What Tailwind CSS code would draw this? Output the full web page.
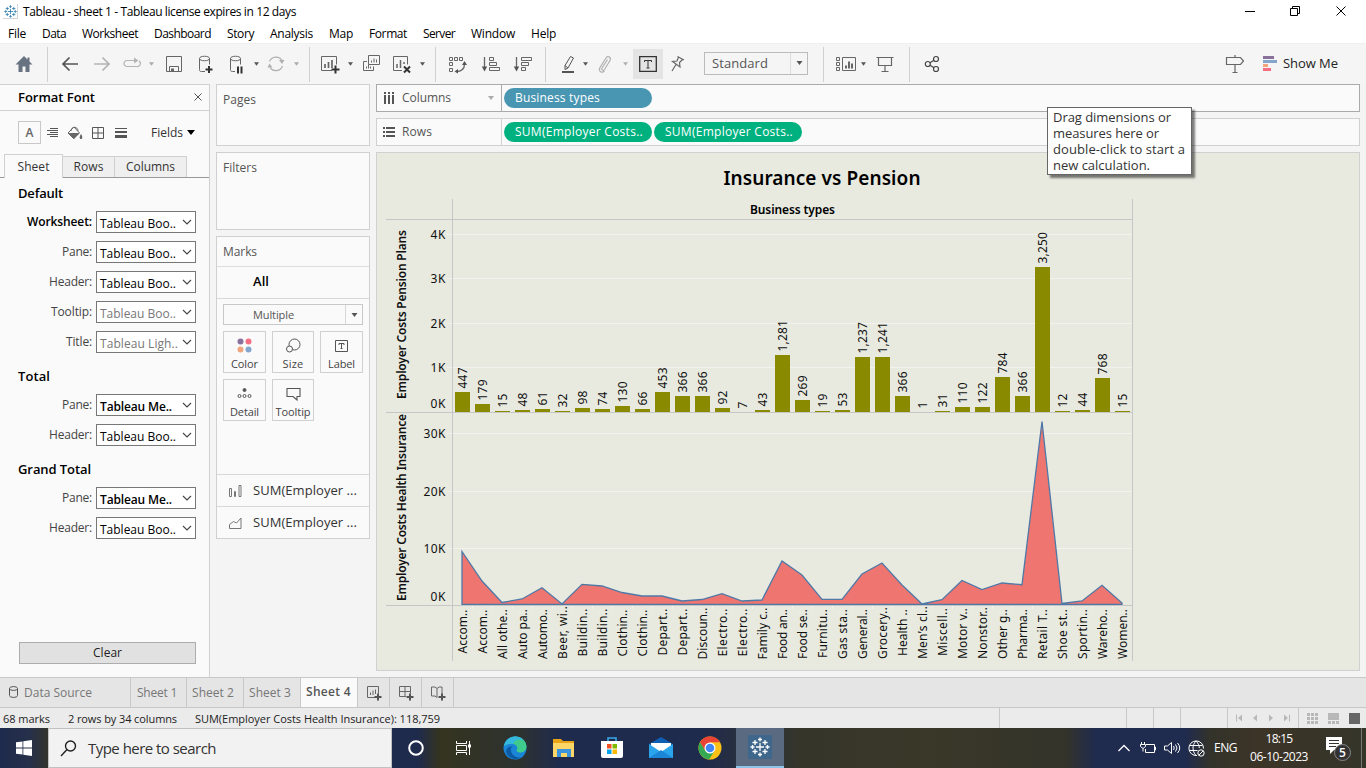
<!DOCTYPE html>
<html lang="en">
<head>
<meta charset="utf-8">
<title>Tableau - sheet 1</title>
<script src="https://cdn.jsdelivr.net/npm/@tailwindcss/browser@4"></script>
</head>
<body class="w-[1366px] h-[768px] overflow-hidden flex flex-col bg-[#f4f4f4] font-['Open_Sans',sans-serif] text-[12px] text-[#333] leading-none whitespace-nowrap">

<!-- shared symbols -->
<svg class="hidden">
  <symbol id="caret" viewBox="0 0 6 4"><path d="M0 0h6L3 4z" fill="currentColor"/></symbol>
  <symbol id="chev" viewBox="0 0 10 6"><path d="M1 1l4 4 4-4" fill="none" stroke="currentColor" stroke-width="1.1"/></symbol>
  <symbol id="tabmark" viewBox="0 0 20 20"><path d="M10 6v8M6 10h8M10 0.5v4M8 2.5h4M10 15.5v4M8 17.5h4M.5 10h4M2.5 8v4M15.5 10h4M17.5 8v4M5 3v5M2.5 5.500h5M15 3v5M12.500 5.500h5M5 12v5M2.500 14.500h5M15 12v5M12.500 14.500h5" fill="none" stroke="currentColor" stroke-width="1.300"/></symbol>
</svg>

<!-- title bar -->
<header class="h-[24px] bg-white flex items-center text-black shrink-0">
  <div class="ml-[3px] mt-[-1px] w-[15px] h-[15px] border-r border-b border-gray-300 text-[#2f7fae] flex items-center justify-center"><svg class="w-[13px] h-[13px]"><use href="#tabmark"/></svg></div>
  <span class="ml-[5px] text-[12px]" data-w="273">Tableau - sheet 1 - Tableau license expires in 12 days</span>
  <svg class="ml-auto mr-[18px] mt-[-3px] w-[104px] h-[12px]" viewBox="0 0 104 12" fill="none" stroke="#000" stroke-width="1"><path d="M1 6.500h10M46.500 3.500h7v7h-7zM48.500 3.500v-2h7v7h-2M92.500 1.500l9 9M101.500 1.500l-9 9"/></svg>
</header>

<!-- menu -->
<nav class="h-[19px] bg-white flex items-center text-black shrink-0 text-[12px]">
  <span class="ml-[8px]" data-w="18">File</span><span class="ml-[16px]" data-w="24">Data</span><span class="ml-[16px]" data-w="56">Worksheet</span><span class="ml-[16px]" data-w="57">Dashboard</span><span class="ml-[16px]" data-w="27">Story</span><span class="ml-[16px]" data-w="43">Analysis</span><span class="ml-[16px]" data-w="24">Map</span><span class="ml-[16px]" data-w="38">Format</span><span class="ml-[16px]" data-w="32">Server</span><span class="ml-[16px]" data-w="44">Window</span><span class="ml-[16px]" data-w="25">Help</span>
</nav>

<!-- toolbar -->
<div class="h-[41px] flex items-center shrink-0 bg-[#f5f5f5] border-t border-[#f0f0f0] text-[#555]">
  <svg class="ml-[14px] w-[20px] h-[20px]" viewBox="0 0 20 20"><path d="M10 2L1.500 10.500H4.500V18H8.500V12.500H11.500V18H15.500V10.500H18.500L15.500 7.500V3.500H13.500V5.500z" fill="#687382"/></svg>
  <i class="ml-[13px] w-px h-[35px] bg-[#d0d0d0]"></i>
  <svg class="ml-[12px] w-[20px] h-[20px]" viewBox="0 0 20 20" fill="none" stroke="#555" stroke-width="1.700"><path d="M18 10H3M9.500 3.500L3 10l6.500 6.500"/></svg>
  <svg class="ml-[12px] w-[20px] h-[20px]" viewBox="0 0 20 20" fill="none" stroke="#b4b4b4" stroke-width="1.700"><path d="M2 10H17M10.500 3.500L17 10l-6.500 6.500"/></svg>
  <svg class="ml-[10px] w-[20px] h-[20px]" viewBox="0 0 20 20" fill="none" stroke="#b4b4b4" stroke-width="1.200"><path d="M9 6.500H5a3 3 0 0 0-3 3v0a3 3 0 0 0 3 3h10a3 3 0 0 0 2-5.500M8 6.500h7"/><path d="M12 3.500l4.500 3-4.500 3z" fill="#b4b4b4" stroke="none"/></svg>
  <svg class="ml-[7px] w-[5px] h-[4px] text-[#aaa]"><use href="#caret"/></svg>
  <svg class="ml-[10px] w-[20px] h-[20px]" viewBox="0 0 20 20" fill="none" stroke="#666"><path d="M2.500 2.500h15v15h-15zM5.500 17.500v-5h9v5" /><path d="M7 14.500h3v3H7z" fill="#666" stroke="none"/></svg>
  <svg class="ml-[12px] w-[20px] h-[20px]" viewBox="0 0 20 20" fill="none" stroke="#666"><path d="M9 17.500H5.500c-2 0-2-1-2-2v-11M13.500 4.500v6M3.500 4.500c0-3 10-3 10 0s-10 3-10 0z"/><path d="M9.500 15.500h7M13 12v7" stroke="#333" stroke-width="2"/></svg>
  <svg class="ml-[10px] w-[20px] h-[20px]" viewBox="0 0 20 20" fill="none" stroke="#666"><path d="M9 17.500H6.500c-2 0-2-1-2-2v-11M14.500 4.500v6M4.500 4.500c0-3 10-3 10 0s-10 3-10 0z"/><path d="M12 12.500v7M15.500 12.500v7" stroke="#333" stroke-width="2"/></svg>
  <svg class="ml-[8px] w-[5px] h-[4px] text-[#555]"><use href="#caret"/></svg>
  <svg class="ml-[7px] w-[20px] h-[20px]" viewBox="0 0 20 20" fill="none" stroke="#b0b0b0" stroke-width="1.200"><path d="M3.500 7.500a7 7 0 0 1 12.500-1M16.500 12a7 7 0 0 1-12.500 1.500"/><path d="M13 6h5.500l-2.500 4zM1.500 13.500h5l-3-4z" fill="#b0b0b0" stroke="none"/></svg>
  <svg class="ml-[8px] w-[5px] h-[4px] text-[#aaa]"><use href="#caret"/></svg>
  <i class="ml-[10px] w-px h-[35px] bg-[#d0d0d0]"></i>
  <svg class="ml-[10px] w-[22px] h-[20px]" viewBox="0 0 22 20" fill="none" stroke="#666"><path d="M12 16.500H1.500v-14h15v8"/><path d="M5 14v-4M8.500 14V8M12 14V6" stroke-width="1.700"/><path d="M11.500 15.500h8M15.500 11.500v8" stroke="#333" stroke-width="2"/></svg>
  <svg class="ml-[6px] w-[5px] h-[4px] text-[#555]"><use href="#caret"/></svg>
  <svg class="ml-[8px] w-[22px] h-[20px]" viewBox="0 0 22 20" fill="none" stroke="#666"><path d="M7.500 1.500h11v9h-11zM6 7.500H2.500v9h10v-4M10.500 8.500v-2M13 8.500v-4M15.500 8.500v-3M5.500 14.500v-2M7.500 14.500v-4M9.500 14.500v-2"/></svg>
  <svg class="ml-[8px] w-[22px] h-[20px]" viewBox="0 0 22 20" fill="none" stroke="#666"><path d="M11 16.500H2.500v-14h14v8"/><path d="M6 14v-4M9.500 14V6M13 10V8" stroke-width="1.500"/><path d="M13 12.500l6 6M19 12.500l-6 6" stroke="#333" stroke-width="2"/></svg>
  <svg class="ml-[7px] w-[5px] h-[4px] text-[#555]"><use href="#caret"/></svg>
  <i class="ml-[10px] w-px h-[35px] bg-[#d0d0d0]"></i>
  <svg class="ml-[12px] w-[20px] h-[20px]" viewBox="0 0 20 20" fill="none" stroke="#666"><path d="M1.500 3.500h3v3h-3zM6.500 3.500h3v3h-3zM11.500 3.500h3v3h-3zM1.500 8.500h3v3h-3zM1.500 14.500h3v3h-3z"/><path d="M16.500 10c0 5-3 7.500-8.500 7.500" stroke-width="1.300"/><path d="M16.500 7l2.500 4h-5zM6.500 17.500l3.500-2.500v4.500z" fill="#555" stroke="none"/></svg>
  <svg class="ml-[13px] w-[20px] h-[20px]" viewBox="0 0 20 20" fill="none" stroke="#666"><path d="M3.500 3v12" stroke-width="1.300"/><path d="M.8 12.500h5.400L3.500 17.500z" fill="#555" stroke="none"/><path d="M8.500 3.500h4v3h-4zM8.500 8.500h7v3h-7zM8.500 13.500h10v3h-10z"/></svg>
  <svg class="ml-[12px] w-[20px] h-[20px]" viewBox="0 0 20 20" fill="none" stroke="#666"><path d="M3.500 3v12" stroke-width="1.300"/><path d="M.8 12.500h5.400L3.500 17.500z" fill="#555" stroke="none"/><path d="M8.500 3.500h10v3h-10zM8.500 8.500h7v3h-7zM8.500 13.500h4v3h-4z"/></svg>
  <i class="ml-[12px] w-px h-[35px] bg-[#d0d0d0]"></i>
  <svg class="ml-[14px] w-[20px] h-[20px]" viewBox="0 0 20 20" fill="none" stroke="#555"><path d="M10.500 2.500l3 1.500-5.500 10-3 1.500v-4zM5 11.500l3 2.500"/><path d="M2 18h12" stroke-width="2"/></svg>
  <svg class="ml-[3px] w-[5px] h-[4px] text-[#555]"><use href="#caret"/></svg>
  <svg class="ml-[7px] w-[20px] h-[20px]" viewBox="0 0 20 20" fill="none" stroke="#b0b0b0" stroke-width="1.200"><path d="M12.500 5.500l-5.500 8.500c-1 2 1.500 3 2.500 1.500l5.500-9c1.500-3-2-5.500-4-2.500l-6 9.500c-2 4 2 6 4.500 3.500"/></svg>
  <svg class="ml-[8px] w-[5px] h-[4px] text-[#b0b0b0]"><use href="#caret"/></svg>
  <div class="ml-[5px] w-[30px] h-[30px] bg-[#e4e4e4] flex items-center justify-center"><svg class="w-[18px] h-[16px]" viewBox="0 0 18 16" fill="none" stroke="#333"><path d="M.7.7h16.600v14.600H.7z" stroke-width="1.300"/><path d="M5.500 6V4.500h7V6M9 4.500v7.500M7.500 12h3"/></svg></div>
  <svg class="ml-[4px] w-[20px] h-[20px]" viewBox="0 0 20 20" fill="none" stroke="#666" stroke-width="1.200"><path d="M10.500 2.500l6.500 3.500M11.500 3L10 7l-4.500.5L13 13l-.5-4.500 3-3M9 10.500l-4 6.500"/></svg>
  <div class="ml-[17px] w-[104px] h-[23px] mt-[-2px] border border-[#bbb] flex items-center text-[#555]">
    <span class="pl-[7px] text-[13px] w-[85px]"><span data-w="56">Standard</span></span>
    <div class="flex-1 h-full border-l border-[#ddd] flex items-center justify-center"><svg class="w-[7px] h-[4px]"><use href="#caret"/></svg></div>
  </div>
  <i class="ml-[15px] w-px h-[35px] bg-[#d0d0d0]"></i>
  <svg class="ml-[11px] w-[22px] h-[20px]" viewBox="0 0 22 20" fill="none" stroke="#666"><path d="M1.500 3.500h3v3h-3zM1.500 8.500h3v3h-3zM1.500 13.500h3v3h-3zM7.500 3.500h13v13h-13z"/><path d="M11 14.500v-3M14 14.500v-7M17 14.500v-5" stroke-width="2"/></svg>
  <svg class="ml-[4px] w-[5px] h-[4px] text-[#555]"><use href="#caret"/></svg>
  <svg class="ml-[9px] w-[20px] h-[20px]" viewBox="0 0 20 20" fill="none" stroke="#666" stroke-width="1.200"><path d="M1.500 3.500h17M3.500 3.500v8h13v-8M10 11.500v6M6.500 17.500h7"/></svg>
  <i class="ml-[14px] w-px h-[35px] bg-[#d0d0d0]"></i>
  <svg class="ml-[14px] w-[20px] h-[20px]" viewBox="0 0 20 20" fill="none" stroke="#444" stroke-width="1.200"><circle cx="3.800" cy="10" r="2.500"/><circle cx="12" cy="5" r="2.500"/><circle cx="12" cy="15" r="2.500"/><path d="M6 8.700l4-2.400M6 11.300l4 2.400"/></svg>
  <svg class="ml-[281px] w-[20px] h-[20px]" viewBox="0 0 20 20" fill="none" stroke="#666" stroke-width="1.200"><path d="M1.500 3.500h14l3 3.500-3 3.500h-14zM10 1v2.500M10 10.500v8M7.500 18.500h5"/></svg>
  <svg class="ml-[18px] w-[14px] h-[16px]" viewBox="0 0 14 16"><path d="M0 0h11v3H0z" fill="#8a719b"/><path d="M0 4h14v3H0z" fill="#85a6cc"/><path d="M0 8h5v3H0z" fill="#f0a57c"/><path d="M0 12h8v3H0z" fill="#f76d82"/></svg>
  <span class="ml-[6px] text-[13px] mt-[-2px] text-[#222]" data-w="55">Show Me</span>
</div>

<!-- work area -->
<main class="h-[593px] flex shrink-0">

  <!-- format pane -->
  <aside class="w-[210px] border-r border-t border-[#d0d0d0] bg-[#fafafa] flex flex-col">
    <div class="h-[26px] border-b border-[#d0d0d0] flex items-center pl-[18px] pr-[7px] justify-between text-black shrink-0">
      <span class="text-[13px] font-semibold" data-w="77">Format Font</span>
      <svg class="w-[8px] h-[8px] mt-[-1px]" viewBox="0 0 8 8"><path d="M.5.5l7 7M7.500.5l-7 7" stroke="#555"/></svg>
    </div>
    <div class="h-[43px] flex items-center pl-[18px] text-[#666] shrink-0">
      <div class="w-[23px] h-[23px] border border-[#c8c8c8] flex items-center justify-center font-semibold text-[12px]">A</div>
      <svg class="ml-[6px] w-[11px] h-[11px]" viewBox="0 0 11 11" stroke="#555"><path d="M3 1.500h8M0 3.500h11M3 5.500h8M0 7.500h11M3 9.500h8"/></svg>
      <svg class="ml-[9px] w-[16px] h-[14px]" viewBox="0 0 16 14" fill="none" stroke="#666"><path d="M1 7l6-6 5.500 6-6 5.500zM4 5c0-5 7-5 7 0"/><path d="M1.500 7h11L7 13zM14 8c2 3 1.500 5 0 5s-2-2 0-5z" fill="#666" stroke="none"/></svg>
      <svg class="ml-[9px] w-[12px] h-[12px]" viewBox="0 0 12 12" fill="none" stroke="#555"><path d="M.5.5h11v11H.5zM6 1v10M1 6h10"/></svg>
      <svg class="ml-[11px] w-[12px] h-[12px]" viewBox="0 0 12 12" fill="#555"><path d="M0 1h12v1H0zM0 4h12v2H0zM0 8h12v3H0z"/></svg>
      <span class="ml-[24px] text-[#333]" data-w="32">Fields</span>
      <svg class="ml-[4px] w-[8px] h-[5px] text-black" viewBox="0 0 8 5"><path d="M0 0h8L4 5z"/></svg>
    </div>
    <div class="h-[24px] flex items-end border-b border-[#999] pl-[4px] shrink-0">
      <div class="w-[59px] h-[24px] mb-[-1px] bg-[#fafafa] border border-b-0 border-[#d0d0d0] flex items-center justify-center"><span data-w="32">Sheet</span></div>
      <div class="w-[52px] h-[21px] bg-[#efefef] border-t border-r border-[#d0d0d0] flex items-center justify-center"><span data-w="30">Rows</span></div>
      <div class="w-[72px] h-[21px] bg-[#efefef] border-t border-r border-[#d0d0d0] flex items-center justify-center"><span data-w="49">Columns</span></div>
    </div>
    <div id="fmt" class="flex flex-col"></div>
    <button class="mt-[95px] ml-[19px] w-[177px] h-[22px] bg-[#e1e1e1] border border-[#adadad] text-[#222]"><span data-w="29">Clear</span></button>
  </aside>

  <!-- cards -->
  <section class="ml-[6px] w-[154px] flex flex-col gap-[6px] text-[#555] shrink-0">
    <div class="h-[62px] border border-[#d0d0d0] bg-[#fafafa] pl-[6px] pt-[9px]"><span data-w="33">Pages</span></div>
    <div class="h-[78px] border border-[#d0d0d0] bg-[#fafafa] pl-[6px] pt-[9px]"><span data-w="34">Filters</span></div>
    <div class="h-[303px] border border-[#d0d0d0] bg-[#fafafa] flex flex-col">
      <div class="h-[30px] border-b border-[#ddd] flex items-center pl-[6px]"><span data-w="34">Marks</span></div>
      <div class="h-[32px] border-b border-[#d8d8d8] flex items-center pl-[36px] pb-[2px] text-[13px] font-semibold text-black"><span data-w="16">All</span></div>
      <div class="mx-[6px] mt-[5px] h-[21px] border border-[#c8c8c8] flex items-center">
        <span class="w-[121px] pl-[29px] text-[11px]"><span data-w="41">Multiple</span></span>
        <div class="flex-1 h-full border-l border-[#d8d8d8] flex items-center justify-center"><svg class="w-[7px] h-[4px]"><use href="#caret"/></svg></div>
      </div>
      <div class="mx-[6px] mt-[6px] grid grid-cols-[43px_42px_43px] gap-[6px] text-[11px] text-[#444]">
        <div class="h-[42px] border border-[#d0d0d0] flex flex-col items-center pt-[6px] gap-[5px]"><svg class="w-[15px] h-[15px]" viewBox="0 0 15 15"><circle cx="3.500" cy="3.500" r="3" fill="#8a719b"/><circle cx="11.500" cy="3.500" r="3" fill="#f76d82"/><circle cx="3.500" cy="11.500" r="3" fill="#f0a57c"/><circle cx="11.500" cy="11.500" r="3" fill="#85a6cc"/></svg><span data-w="27">Color</span></div>
        <div class="h-[42px] border border-[#d0d0d0] flex flex-col items-center pt-[6px] gap-[5px]"><svg class="w-[15px] h-[15px]" viewBox="0 0 15 15" fill="none" stroke="#555"><circle cx="8.500" cy="6.500" r="5.500"/><circle cx="3.500" cy="11" r="3" fill="#fafafa"/></svg><span data-w="21">Size</span></div>
        <div class="h-[42px] border border-[#d0d0d0] flex flex-col items-center pt-[6px] gap-[5px]"><svg class="w-[15px] h-[15px]" viewBox="0 0 15 15" fill="none" stroke="#555"><path d="M1.500 2.500h12v11h-12zM5 7V5.500h5V7M7.500 5.500v5M6.500 10.500h2"/></svg><span data-w="27">Label</span></div>
        <div class="h-[42px] border border-[#d0d0d0] flex flex-col items-center pt-[6px] gap-[5px]"><svg class="w-[15px] h-[15px]" viewBox="0 0 15 15" fill="none" stroke="#555"><circle cx="7.500" cy="4" r="1.500" fill="#555"/><circle cx="2.500" cy="10" r="1.500"/><circle cx="7.500" cy="10" r="1.500"/><circle cx="12.500" cy="10" r="1.500"/></svg><span data-w="29">Detail</span></div>
        <div class="h-[42px] border border-[#d0d0d0] flex flex-col items-center pt-[6px] gap-[5px]"><svg class="w-[15px] h-[15px]" viewBox="0 0 15 15" fill="none" stroke="#555" stroke-width="1.100"><path d="M1 2.500h13v8h-3v3.500l-4-3.500H1z"/></svg><span data-w="35">Tooltip</span></div>
      </div>
      <div class="mt-auto h-[32px] border-t border-[#d8d8d8] flex items-center pl-[12px] text-[13px]"><svg class="w-[13px] h-[14px]" viewBox="0 0 13 14" fill="none" stroke="#777"><path d="M.5 4.500h2v8h-2zM5.500 7.500h1v5h-1zM10 1.500h2v11h-2z"/></svg><span class="ml-[11px] text-[#333]" data-w="104">SUM(Employer ...</span></div>
      <div class="h-[32px] border-t border-[#d8d8d8] flex items-center pl-[12px] text-[13px]"><svg class="w-[13px] h-[14px]" viewBox="0 0 13 14" fill="none" stroke="#777"><path d="M.5 12.500V8.500l4-3 3 1.500 4.500-5v10.500z"/></svg><span class="ml-[11px] text-[#333]" data-w="104">SUM(Employer ...</span></div>
    </div>
  </section>

  <!-- shelves and view -->
  <section class="ml-[6px] w-[984px] flex flex-col shrink-0 relative">
    <div class="h-[28px] border border-[#aaa] bg-[#fafafa] flex items-center text-[#555]">
      <svg class="ml-[7px] w-[11px] h-[12px]" viewBox="0 0 11 12" fill="#555"><path d="M0 0h2v2H0zM4 0h2v2H4zM8 0h2v2H8zM0 3h2v9H0zM4 3h2v9H4zM8 3h2v9H8z"/></svg>
      <span class="ml-[7px] w-[85px]"><span data-w="49">Columns</span></span>
      <svg class="w-[8px] h-[4px] text-[#aaa]"><use href="#caret"/></svg>
      <div class="ml-[6px] w-px h-full bg-[#aaa]"></div>
      <div class="ml-[2px] w-[148px] h-[20px] rounded-full bg-[#4996b2] text-white flex items-center pl-[11px]"><span data-w="85">Business types</span></div>
    </div>
    <div class="mt-[6px] h-[28px] border border-[#d0d0d0] bg-[#fafafa] flex items-center text-[#555]">
      <svg class="ml-[6px] w-[12px] h-[10px]" viewBox="0 0 12 10" fill="#555"><path d="M0 0h2v2H0zM0 4h2v2H0zM0 8h2v2H0zM3 0h9v2H3zM3 4h9v2H3zM3 8h9v2H3z"/></svg>
      <span class="ml-[7px] w-[99px]"><span data-w="30">Rows</span></span>
      <div class="w-px h-full bg-[#d0d0d0]"></div>
      <div class="ml-[2px] w-[148px] h-[20px] rounded-full bg-[#00b180] text-white flex items-center pl-[11px]"><span data-w="128">SUM(Employer Costs..</span></div>
      <div class="ml-[2px] w-[148px] h-[20px] rounded-full bg-[#00b180] text-white flex items-center pl-[11px]"><span data-w="128">SUM(Employer Costs..</span></div>
    </div>
    <div class="mt-[6px] h-[519px] border border-[#d0d0d0] bg-[#e8eae0]">
      <svg id="chart" class="w-[982px] h-[517px] font-['Noto_Sans',sans-serif]" viewBox="377 153 982 517" font-size="12" fill="#111"></svg>
    </div>
    <!-- tooltip -->
    <div class="absolute left-[671px] top-[23px] w-[145px] h-[68px] bg-white border border-[#666] shadow-[3px_3px_2px_rgba(0,0,0,0.5)] pl-[5px] pt-[1px] text-[13px] leading-[16px] text-[#333] flex flex-col items-start">
      <span data-w="118">Drag dimensions or</span><span data-w="106">measures here or</span><span data-w="132">double-click to start a</span><span data-w="97">new calculation.</span>
    </div>
  </section>
</main>

<!-- sheet tabs -->
<div class="h-[31px] shrink-0 bg-[#e5e5e5] border-t border-b border-[#c8c8c8] flex items-stretch text-[#777]">
  <div class="w-[131px] border-r border-[#c8c8c8] flex items-center pl-[9px]"><svg class="w-[10px] h-[12px] mt-[-2px]" viewBox="0 0 10 12" fill="none" stroke="#555"><path d="M.5 2.500v7c0 2.500 8 2.500 8 0v-7M.5 2.500c0-2.500 8-2.500 8 0s-8 2.500-8 0z"/></svg><span class="ml-[5px]" data-w="68">Data Source</span></div>
  <div class="w-[56px] border-r border-[#c8c8c8] flex items-center pl-[6px]"><span data-w="40">Sheet 1</span></div>
  <div class="w-[57px] border-r border-[#c8c8c8] flex items-center pl-[5px]"><span data-w="42">Sheet 2</span></div>
  <div class="w-[57px] border-r border-[#c8c8c8] flex items-center pl-[5px]"><span data-w="42">Sheet 3</span></div>
  <div class="w-[57px] border-r border-[#c8c8c8] bg-[#fafafa] flex items-center pl-[5px] pb-[2px] font-semibold text-[#555]"><span data-w="45">Sheet 4</span></div>
  <div class="w-[32px] border-r border-[#c8c8c8] flex items-center justify-center"><svg class="w-[16px] h-[16px]" viewBox="0 0 16 16" fill="none" stroke="#666"><path d="M9 12.500H1.500v-11h11v7M4.500 10V7.500M7 10V5.500M9.500 9V4.500"/><path d="M8.500 12h7M12 8.500v7" stroke="#555" stroke-width="2"/></svg></div>
  <div class="w-[32px] border-r border-[#c8c8c8] flex items-center justify-center"><svg class="w-[16px] h-[16px]" viewBox="0 0 16 16" fill="none" stroke="#666"><path d="M8 11.500H1.500v-10h11v7M7 1.500v10M1.500 6.500h11"/><path d="M8.500 12h7M12 8.500v7" stroke="#555" stroke-width="2"/></svg></div>
  <div class="w-[32px] border-r border-[#c8c8c8] flex items-center justify-center"><svg class="w-[16px] h-[16px]" viewBox="0 0 16 16" fill="none" stroke="#666"><path d="M7 12.500l-2-1.500H1.500v-9H5l2 1.500 2-1.500h3v7M7 3.500v9"/><path d="M8.500 12h7M12 8.500v7" stroke="#555" stroke-width="2"/></svg></div>
</div>

<!-- status bar -->
<div class="h-[20px] shrink-0 bg-[#ebebeb] flex items-center pl-[3px] text-[11px] text-[#222]">
  <span data-w="47">68 marks</span><span class="ml-[18px]" data-w="109">2 rows by 34 columns</span><span class="ml-[18px]" data-w="245">SUM(Employer Costs Health Insurance): 118,759</span>
  <div class="ml-auto h-full flex items-center text-[#b8b8b8]">
    <i class="w-px h-full bg-[#c8c8c8] mr-[126px]"></i><i class="w-px h-full bg-[#c8c8c8] mr-[26px]"></i><i class="w-px h-full bg-[#c8c8c8] mr-[26px]"></i><i class="w-px h-full bg-[#c8c8c8] mr-[46px]"></i><i class="w-px h-full bg-[#c8c8c8] mr-[8px]"></i>
    <svg class="w-[56px] h-[8px]" viewBox="0 0 56 8" fill="currentColor"><path d="M0 .5h1v7H0zM6 .5v7L2 4zM21 .5v7L17 4zM33 .5v7L37 4zM48 .5v7L52 4zM53 .5h1v7h-1z"/></svg>
    <i class="w-px h-full bg-[#c8c8c8] ml-[6px] mr-[8px]"></i>
    <svg class="w-[54px] h-[11px] mr-[5px]" viewBox="0 0 54 11" fill="#b8b8b8"><path d="M0 0h3v3H0zM4 0h3v3H4zM8 0h3v3H8zM0 4h3v3H0zM4 4h3v3H4zM8 4h3v3H8zM0 8h3v3H0zM4 8h3v3H4zM8 8h3v3H8zM21 0h11v7H21zM21 8h3v3H21zM25 8h3v3H25zM29 8h3v3H29z"/><path d="M42 0h11v11H42z" fill="#666"/></svg>
  </div>
</div>

<!-- taskbar -->
<footer class="h-[40px] shrink-0 flex items-center text-white bg-[linear-gradient(90deg,#1f2b4d_0px,#26304a_30px,#33342c_48px,#1f2b4d_392px,#1f2b4d_418px,#35341f_440px,#2d3230_520px,#1f2b4d_560px,#1f2b4d_700px,#35352a_800px,#3a3828_930px,#33332a_1066px,#1f2b4f_1096px,#1f2b4f_1185px,#33332a_1210px,#3c3427_1260px,#35352a_1366px)]">
  <div class="w-[48px] flex justify-center"><svg class="w-[16px] h-[16px]" viewBox="0 0 16 16" fill="#fff"><path d="M0 2.300l6.500-.9v6.200H0zM7.300 1.300L16 0v7.600H7.300zM0 8.400h6.500v6.200L0 13.700zM7.300 8.400H16V16l-8.700-1.300z"/></svg></div>
  <div class="w-[344px] h-full bg-[#f2f2f2] border border-[#c0c0c0] flex items-center text-[#333]">
    <svg class="ml-[11px] w-[17px] h-[17px]" viewBox="0 0 17 17" fill="none" stroke="#222" stroke-width="1.400"><circle cx="10.500" cy="6" r="5"/><path d="M7 9.500L1 16"/></svg>
    <span class="ml-[11px] text-[15px]" data-w="128">Type here to search</span>
  </div>
  <div class="w-[48px] flex justify-center"><svg class="w-[16px] h-[16px]" viewBox="0 0 16 16" fill="none" stroke="#fff" stroke-width="2"><circle cx="8" cy="8" r="6.800"/></svg></div>
  <div class="w-[48px] flex justify-center"><svg class="w-[16px] h-[16px]" viewBox="0 0 16 16" fill="none" stroke="#fff"><path d="M.5 1v2.500h10V1M.5 5.500h10v5H.5zM.5 15v-2.500h10V15M13.500 1v14"/><path d="M12 4.500h3v3h-3z" fill="#fff" stroke="none"/></svg></div>
  <div class="w-[54px] flex justify-center"><svg class="w-[24px] h-[24px]" viewBox="0 0 24 24"><circle cx="12" cy="12" r="11.500" fill="#1b86d8"/><path d="M1 10C3 3 8 .5 12 .5c7 0 11.500 5 11.500 10 0 4-3 6-6.500 6-3 0-4-1.500-3-3 .8-1.300.5-4.500-3.500-5.500C6.500 7 2.500 9 1 10z" fill="#3ecb8c"/><path d="M1 10C3 3 8 .5 12 .5c4 0 7 1.500 9 4-5-2-9-1-11 3.500C6 7 3 8.500 1 10z" fill="#35b8e0"/><path d="M8 12c-1 6 4 10 10 9.500C12 25 4 22 3 15c1-4 4-5 7-4.500z" fill="#0c59a4"/></svg></div>
  <div class="w-[44px] flex justify-center"><svg class="w-[22px] h-[20px]" viewBox="0 0 22 20"><path d="M0 1h8l2 2h11v4H0z" fill="#e8a317"/><path d="M0 5h21v14H0z" fill="#fcd667"/><path d="M4 11h14v8h-4v-4H8v4H4z" fill="#3a93dc"/></svg></div>
  <div class="w-[52px] flex justify-center"><svg class="w-[24px] h-[24px]" viewBox="0 0 24 24"><path d="M8 5V2h8v3" fill="none" stroke="#3aa9e8" stroke-width="1.600"/><path d="M1 5h22v15q0 2-2 2H3q-2 0-2-2z" fill="#fff"/><path d="M7 8h4.500v4.500H7z" fill="#f25022"/><path d="M12.500 8H17v4.500h-4.500z" fill="#7fba00"/><path d="M7 13.500h4.500V18H7z" fill="#00a4ef"/><path d="M12.500 13.500H17V18h-4.500z" fill="#ffb900"/></svg></div>
  <div class="w-[46px] flex justify-center"><svg class="w-[24px] h-[22px]" viewBox="0 0 24 22"><path d="M0 7L12 0l12 7v14H0z" fill="#0f5fb4"/><path d="M2 6h20v9H2z" fill="#fff"/><path d="M0 7l12 8 12-8v14H0z" fill="#2aa4ea"/><path d="M0 21l12-8 12 8z" fill="#1b86d8"/></svg></div>
  <div class="w-[52px] flex justify-center"><svg class="w-[24px] h-[24px]" viewBox="0 0 24 24"><circle cx="12" cy="12" r="11.500" fill="#fbc116"/><path d="M2 6.300A11.500 11.500 0 0 1 22 6.300H12L7 14.500z" fill="#ea4335"/><path d="M2 6.300A11.500 11.500 0 0 0 11 23.500L16.500 15 7 14.500z" fill="#34a853"/><circle cx="12" cy="12" r="5.500" fill="#fff"/><circle cx="12" cy="12" r="4.300" fill="#4285f4"/></svg></div>
  <div class="w-[48px] h-full bg-[#5a6a80] border-b-2 border-[#8ec3ea] flex items-center justify-center text-[#cfe2f2]"><div class="w-[24px] h-[24px] bg-[#3f678c] flex items-center justify-center text-white"><svg class="w-[20px] h-[20px]"><use href="#tabmark"/></svg></div></div>
  <svg class="ml-auto w-[12px] h-[8px]" viewBox="0 0 12 8" fill="none" stroke="#fff" stroke-width="1.300"><path d="M.5 7L6 1.500 11.500 7"/></svg>
  <svg class="ml-[10px] w-[16px] h-[14px]" viewBox="0 0 16 14" fill="none" stroke="#fff"><path d="M6 3.500h8.500v8H5.500V8M14.500 6h1v3h-1M1.500 1v2M4.500 1v2M.5 3.500h5v2L3 7.500.5 5.500zM3 7.500v3"/></svg>
  <svg class="ml-[8px] w-[17px] h-[14px]" viewBox="0 0 17 14" fill="none" stroke="#fff"><path d="M.5 5h3l4-3.500v11L3.500 9h-3zM9.500 5q1.500 2 0 4M11.500 3.500q3 3.500 0 7M13.500 2q4.500 5 0 10"/></svg>
  <svg class="ml-[7px] w-[17px] h-[17px]" viewBox="0 0 17 17" fill="none" stroke="#fff"><path d="M9 15.500A7.300 7.300 0 1 1 15.500 8.500M8 1c-4 4-4 10 0 14.500M8 1c2.500 2.500 3.300 5 3.300 7M1.500 5.500h13M1.500 10.500h8"/><circle cx="13" cy="13" r="3.200"/><path d="M11 15l4-4"/></svg>
  <span class="ml-[9px] text-[12px]" data-w="23">ENG</span>
  <div class="ml-[12px] w-[60px] flex flex-col items-center text-[12px] gap-[6px]"><span data-w="27">18:15</span><span data-w="58">06-10-2023</span></div>
  <svg class="ml-[17px] w-[26px] h-[26px] mr-[9px]" viewBox="0 0 26 26"><path d="M0 2h16v13H8l-4 4v-4H0z" fill="#fff"/><path d="M3 5.500h10M3 8.500h10M3 11.500h7" stroke="#333"/><circle cx="16.500" cy="17.500" r="8" fill="#333" stroke="#888"/><text x="16.500" y="22" text-anchor="middle" font-size="12" font-weight="600" fill="#fff">5</text></svg>
  <i class="w-px h-full bg-[#777] mr-[4px]"></i>
</footer>

<script>
/* format pane groups */
const groups = [
  ["Default", 45, [["Worksheet:", 65, "Tableau Boo..", 1], ["Pane:", 30, "Tableau Boo..", 0], ["Header:", 43, "Tableau Boo..", 0], ["Tooltip:", 41, "Tableau Boo..", 2], ["Title:", 26, "Tableau Ligh..", 2]]],
  ["Total", 32, [["Pane:", 30, "Tableau Me..", 3], ["Header:", 43, "Tableau Boo..", 0]]],
  ["Grand Total", 73, [["Pane:", 30, "Tableau Me..", 3], ["Header:", 43, "Tableau Boo..", 0]]]
];
document.getElementById("fmt").innerHTML = groups.map(([title, tw, rows]) => `
  <div class="h-[33px] flex items-center pl-[18px] pb-[2px] text-[13px] font-semibold text-black"><span data-w="${tw}">${title}</span></div>
  <div class="flex flex-col gap-[8px]">` + rows.map(([l, w, v, k]) => `
    <div class="h-[22px] flex items-center">
      <div class="w-[92px] text-right ${k === 1 ? "font-semibold text-black" : "text-[#444]"}"><span data-w="${w}">${l}</span></div>
      <div class="ml-[4px] w-[100px] h-[22px] bg-white border border-[#777] flex items-center pl-[3px] pt-[3px] text-[12px] ${k === 2 ? "text-[#777]" : "text-black"} ${k === 3 ? "font-semibold" : "font-normal"}">
        <span class="w-[82px]"><span data-w="${k === 3 ? 72 : k === 2 && l === "Title:" ? 78 : 76}">${v}</span></span>
        <svg class="w-[10px] h-[6px] mt-[-3px] text-[#444]"><use href="#chev"/></svg>
      </div>
    </div>`).join("") + `</div><div class="h-[8px]"></div>`).join("");

/* chart */
const bars = [[447,392],[179,404],[15,411],[48,410],[61,409],[32,411],[98,408],[74,409],[130,406],[66,409],[453,392],[366,396],[366,396],[92,408],[7,412],[43,410],[1281,355],[269,400],[19,411],[53,410],[1237,357],[1241,357],[366,396],[1,412],[31,411],[110,407],[122,407],[784,377],[366,396],[3250,267],[12,411],[44,410],[768,378],[15,411]];
const area = [551.5,581,602.5,599,587.7,604,584.3,586,592.5,596,596,601,599.5,593.7,601,600,561,575,599.3,599.3,574,563,585,604,599.7,580.5,589.5,583,584.7,421.5,603.5,601,585.3,603];
const cats = [["Accom..",44],["Accom..",44],["All othe..",50],["Auto pa..",50],["Automo..",50],["Beer, wi..",53],["Buildin..",48],["Buildin..",48],["Clothin..",47],["Clothin..",47],["Depart..",47],["Depart..",47],["Discoun..",52],["Electro..",48],["Electro..",48],["Family c..",52],["Food an..",50],["Food se..",50],["Furnitu..",49],["Gas sta..",50],["General..",50],["Grocery..",52],["Health ..",47],["Men’s cl..",53],["Miscell..",48],["Motor v..",51],["Nonstor..",52],["Other g..",50],["Pharma..",50],["Retail T..",50],["Shoe st..",50],["Sportin..",50],["Wareho..",50],["Women..",50]];
const bottoms = [653.5,653.5,659,659,659,659,656.5,656.5,656.5,656.5,655.5,655.5,659.5,656.5,656.5,659.5,659,659,658,659,659,659,656,659,656,659,659,659,659,659,659,659,659,659];
let s = "";
const hl = (y, c, x = 386) => `<path d="M${x} ${y}H1132" stroke="${c}"/>`;
[234.5,278.5,323.5,367.5,433.5,491.5,548.5].forEach(y => s += hl(y, "#f2f3ee", 447));
for (let i = 0; i < 34; i++) s += `<path d="M${452.5 + 20 * i} 606v3" stroke="#f2f3ee"/>`;
s += `<path d="M462 604.500L${area.map((y, i) => `${462 + 20 * i} ${y}`).join("L")}L1122 604.500z" fill="#ef7570" stroke="#4e79a7" stroke-width="1.300"/>`;
[219.5,412.5,605.5].forEach(y => s += hl(y, "#c6c6c6"));
s += `<path d="M452.500 199V661M1132.500 199V661" stroke="#c6c6c6"/>`;
bars.forEach(([v, y], i) => {
  const x = 455 + 20 * i;
  if (y < 412) s += `<rect x="${x}" y="${y}" width="15" height="${412 - y}" fill="#8a8a00"/>`;
  s += `<text transform="translate(${x + 12} ${y - 3.5}) rotate(-90)" letter-spacing=".2">${v.toLocaleString("en-US")}</text>`;
});
cats.forEach(([t, w], i) => s += `<text transform="translate(${467 + 20 * i} ${bottoms[i]}) rotate(-90)" textLength="${w}">${t}</text>`);
[["4K",239],["3K",283],["2K",328],["1K",372],["0K",408],["30K",438],["20K",496],["10K",553],["0K",601]].forEach(([t, y]) => s += `<text x="445.500" y="${y}" text-anchor="end" textLength="${t.length === 2 ? 15 : 22}">${t}</text>`);
s += `<text x="723.500" y="185" font-size="19" font-weight="600" fill="#000" textLength="197">Insurance vs Pension</text>
<text x="750" y="214" font-weight="600" fill="#000" textLength="85">Business types</text>
<text transform="translate(406 399) rotate(-90)" font-weight="600" textLength="169">Employer Costs Pension Plans</text>
<text transform="translate(406 601) rotate(-90)" font-weight="600" textLength="187">Employer Costs Health Insurance</text>`;
document.getElementById("chart").innerHTML = s;

/* even out the letter spacing of labels that have a set width */
function fit() {
  document.querySelectorAll("[data-w]").forEach(el => {
    el.style.display = "inline-block";
    el.style.letterSpacing = "0px";
    const w = el.getBoundingClientRect().width;
    el.style.letterSpacing = (el.dataset.w - w) / el.textContent.length + "px";
  });
}
fit();
addEventListener("load", () => { fit(); document.fonts.ready.then(fit); requestAnimationFrame(fit); });
</script>
</body>
</html>
